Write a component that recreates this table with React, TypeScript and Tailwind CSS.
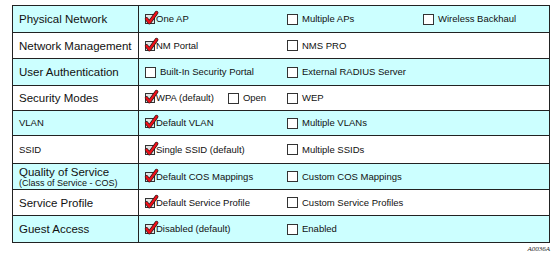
type Opt = { label: string; checked?: boolean };

type Row = {
  title: string;
  sub?: string;
  small?: boolean;
  cyan: boolean;
  h: string;
  first: Opt[];
  rest: Opt[];
};

const rows: Row[] = [
  { title: "Physical Network", cyan: true, h: "h-[26px]", first: [{ label: "One AP", checked: true }], rest: [{ label: "Multiple APs" }, { label: "Wireless Backhaul" }] },
  { title: "Network Management", cyan: false, h: "h-[26px]", first: [{ label: "NM Portal", checked: true }], rest: [{ label: "NMS PRO" }] },
  { title: "User Authentication", cyan: true, h: "h-[27px]", first: [{ label: "Built-In Security Portal" }], rest: [{ label: "External RADIUS Server" }] },
  { title: "Security Modes", cyan: false, h: "h-[25px]", first: [{ label: "WPA (default)", checked: true }, { label: "Open" }], rest: [{ label: "WEP" }] },
  { title: "VLAN", small: true, cyan: true, h: "h-[25px]", first: [{ label: "Default VLAN", checked: true }], rest: [{ label: "Multiple VLANs" }] },
  { title: "SSID", small: true, cyan: false, h: "h-[28px]", first: [{ label: "Single SSID (default)", checked: true }], rest: [{ label: "Multiple SSIDs" }] },
  { title: "Quality of Service", sub: "(Class of Service - COS)", cyan: true, h: "h-[26px]", first: [{ label: "Default COS Mappings", checked: true }], rest: [{ label: "Custom COS Mappings" }] },
  { title: "Service Profile", cyan: false, h: "h-[26px]", first: [{ label: "Default Service Profile", checked: true }], rest: [{ label: "Custom Service Profiles" }] },
  { title: "Guest Access", cyan: true, h: "h-[27px]", first: [{ label: "Disabled (default)", checked: true }], rest: [{ label: "Enabled" }] },
];

// box is 10px wide in flow; the red tick runs past its top-right corner
function CheckedBox() {
  return (
    <svg width="10" height="10" viewBox="0 0 10 10" overflow="visible" className="shrink-0 mr-[1px]">
      <rect x="0.5" y="0.5" width="9" height="9" fill="#e4e4e4" stroke="#333" />
      <path d="M1.6 5 L4.4 8.6 L11.6 -1.4" fill="none" stroke="#1a1a1a" strokeWidth="3.6" strokeLinejoin="round" strokeLinecap="round" />
      <path d="M1.6 5 L4.4 8.6 L11.6 -1.4" fill="none" stroke="#ee1019" strokeWidth="2.4" strokeLinejoin="round" strokeLinecap="round" />
    </svg>
  );
}

function Option({ opt }: { opt: Opt }) {
  return (
    <div className="flex items-center">
      {opt.checked ? (
        <CheckedBox />
      ) : (
        <span className="w-[11px] h-[11px] shrink-0 border border-[#333] bg-white mr-[4px]" />
      )}
      <span className="text-[9.5px] leading-none text-[#111]">{opt.label}</span>
    </div>
  );
}

export default function App() {
  return (
    <div className="w-[560px] h-[262px] bg-white pt-[5px] pl-[12px] font-['Liberation_Sans',Arial,sans-serif]">
      <div className="w-[538px] border border-[#222]">
        {rows.map((row, i) => (
          <div
            key={row.title}
            className={`flex ${row.h} ${i > 0 ? "border-t border-[#222]" : ""} ${row.cyan ? "bg-[#ccffff]" : "bg-white"}`}
          >
            <div className="w-[126px] shrink-0 border-r border-[#222] pl-[6px] flex flex-col justify-center text-[#111]">
              <div className={row.small ? "text-[9.5px] leading-none" : "text-[11.5px] leading-[12px]"}>{row.title}</div>
              {row.sub && <div className="text-[9px] leading-[10px]">{row.sub}</div>}
            </div>
            <div className="flex-1 pl-[6px] grid grid-cols-[142px_136px_1fr] items-center">
              <div className="flex items-center gap-[14px]">
                {row.first.map((o) => (
                  <Option key={o.label} opt={o} />
                ))}
              </div>
              {row.rest.map((o) => (
                <Option key={o.label} opt={o} />
              ))}
            </div>
          </div>
        ))}
      </div>
      <div className="w-[538px] text-right text-[7px] italic leading-none mt-[3px] text-[#222] font-['Liberation_Serif',serif]">
        A0036A
      </div>
    </div>
  );
}
